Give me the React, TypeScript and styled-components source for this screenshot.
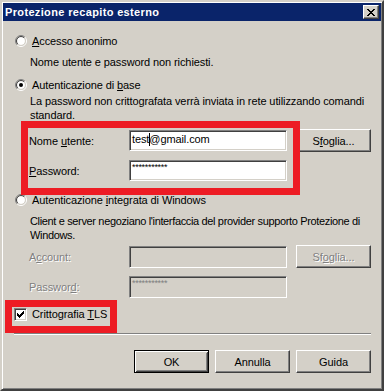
import React from "react";
import styled, { createGlobalStyle, css } from "styled-components";

const GlobalStyle = createGlobalStyle`
  html, body { margin: 0; padding: 0; background: #d4d0c8; }
  body { font-family: "Liberation Sans", Arial, sans-serif; font-size: 11px; color: #000; letter-spacing: -0.1px; }
  * { box-sizing: border-box; }
`;

const FACE = "#d4d0c8";
const SHADOW = "#808080";
const DARK = "#404040";

const Window = styled.div`
  position: relative;
  width: 384px;
  height: 391px;
  background: ${FACE};
  border-style: solid;
  border-width: 2px;
  border-color: ${FACE} ${DARK} ${DARK} ${FACE};
  box-shadow: inset 1px 1px #fff, inset -1px -1px ${SHADOW};
  display: flex;
  flex-direction: column;
`;

const TitleBar = styled.div`
  margin: 1px 1px 0 1px;
  height: 18px;
  background: #0a246a;
  display: flex;
  align-items: center;
  justify-content: space-between;
  padding: 0 2px 0 2px;
`;

const TitleText = styled.span`
  color: #fff;
  font-weight: bold;
  font-size: 11px;
  letter-spacing: 0.35px;
  line-height: 14px;
`;

const raised = css`
  border: 1px solid;
  border-color: #fff ${DARK} ${DARK} #fff;
  box-shadow: inset -1px -1px ${SHADOW}, inset 1px 1px ${FACE};
`;

const sunken = css`
  border: 1px solid;
  border-color: ${SHADOW} #fff #fff ${SHADOW};
  box-shadow: inset 1px 1px ${DARK}, inset -1px -1px ${FACE};
`;

const CloseButton = styled.div`
  ${raised};
  width: 16px;
  height: 14px;
  background: ${FACE};
  display: flex;
  align-items: center;
  justify-content: center;
`;

const Body = styled.div`
  flex: 1;
  display: flex;
  flex-direction: column;
  padding: 13px 11px 0 12px;
`;

const Row = styled.div<{ $mt?: number; $pl?: number }>`
  display: flex;
  align-items: center;
  height: 14px;
  margin-top: ${(p) => p.$mt ?? 0}px;
  padding-left: ${(p) => p.$pl ?? 0}px;
  gap: 5px;
  line-height: 14px;
  white-space: nowrap;
`;

const Desc = styled.div<{ $mt?: number; $ls?: number }>`
  margin-top: ${(p) => p.$mt ?? 0}px;
  padding-left: 16px;
  line-height: 14px;
  white-space: nowrap;
  ${(p) => p.$ls !== undefined && css`letter-spacing: ${p.$ls}px;`}
`;

const FieldRow = styled.div<{ $mt?: number }>`
  display: flex;
  align-items: center;
  height: 23px;
  margin-top: ${(p) => p.$mt ?? 0}px;
  padding-left: 15px;
`;

const FieldLabel = styled.span<{ $disabled?: boolean }>`
  width: 100px;
  line-height: 14px;
  white-space: nowrap;
  ${(p) =>
    p.$disabled &&
    css`
      color: ${SHADOW};
      text-shadow: 1px 1px #fff;
    `}
`;

const TextField = styled.div<{ $disabled?: boolean; $h?: number }>`
  ${sunken};
  width: 158px;
  height: ${(p) => p.$h ?? 21}px;
  background: ${(p) => (p.$disabled ? FACE : "#fff")};
  padding: 1px 2px;
  line-height: 15px;
  white-space: nowrap;
  overflow: hidden;
  display: flex;
  align-items: flex-start;
`;

const Stars = styled.span<{ $disabled?: boolean }>`
  font-size: 9px;
  line-height: 9px;
  letter-spacing: -0.3px;
  padding-top: 1px;
  color: ${(p) => (p.$disabled ? SHADOW : "#000")};
`;

const Caret = styled.span`
  display: inline-block;
  width: 1px;
  height: 13px;
  background: #000;
  margin-right: -1px;
  margin-top: 1px;
`;

const Button = styled.div<{ $default?: boolean; $disabled?: boolean; $ml?: number }>`
  width: 75px;
  height: 23px;
  margin-left: ${(p) => p.$ml ?? 0}px;
  background: ${FACE};
  display: flex;
  align-items: center;
  justify-content: center;
  line-height: 14px;
  ${(p) =>
    p.$default
      ? css`
          border: 1px solid #000;
          box-shadow: inset 1px 1px #fff, inset -1px -1px ${DARK},
            inset 2px 2px ${FACE}, inset -2px -2px ${SHADOW};
        `
      : raised};
  ${(p) =>
    p.$disabled &&
    css`
      color: ${SHADOW};
      text-shadow: 1px 1px #fff;
    `}
`;

const Separator = styled.div<{ $mt?: number }>`
  margin-top: ${(p) => p.$mt ?? 0}px;
  height: 2px;
  border-top: 1px solid ${SHADOW};
  border-bottom: 1px solid #fff;
`;

const ButtonBar = styled.div<{ $mt?: number }>`
  display: flex;
  justify-content: flex-end;
  gap: 6px;
  margin-top: ${(p) => p.$mt ?? 0}px;
`;

const Highlight = styled.div`
  position: absolute;
  border: 7px solid #ed1c24;
  pointer-events: none;
`;

const Mnemonic = styled.span`
  text-decoration: underline;
`;

const CloseGlyph = () => {
  const rows = ["11000011", "01100110", "00111100", "00011000", "00111100", "01100110", "11000011"];
  return (
    <svg width="8" height="7" viewBox="0 0 8 7" shapeRendering="crispEdges">
      {rows.map((r, y) =>
        r.split("").map((c, x) => (c === "1" ? <rect key={`${x}-${y}`} x={x} y={y} width="1" height="1" fill="#000" /> : null))
      )}
    </svg>
  );
};

const Radio: React.FC<{ checked?: boolean }> = ({ checked }) => {
  const arc = (r: number) => {
    const c = 6;
    const d = r * Math.SQRT1_2;
    return {
      tl: `M ${c - d} ${c + d} A ${r} ${r} 0 0 1 ${c + d} ${c - d}`,
      br: `M ${c + d} ${c - d} A ${r} ${r} 0 0 1 ${c - d} ${c + d}`,
    };
  };
  const o = arc(5.5);
  const i = arc(4.5);
  return (
    <svg width="12" height="12" viewBox="0 0 12 12" style={{ flex: "none" }}>
      <circle cx="6" cy="6" r="4" fill="#fff" />
      <path d={o.tl} stroke={SHADOW} fill="none" />
      <path d={o.br} stroke="#fff" fill="none" />
      <path d={i.tl} stroke={DARK} fill="none" />
      <path d={i.br} stroke={FACE} fill="none" />
      {checked && <circle cx="6" cy="6" r="2" fill="#000" />}
    </svg>
  );
};

const CheckBoxBox = styled.div`
  ${sunken};
  width: 13px;
  height: 13px;
  background: #fff;
  flex: none;
  display: flex;
  align-items: center;
  justify-content: center;
`;

const CheckGlyph = () => {
  const rows = ["0000001", "0000011", "1000111", "1101110", "1111100", "0111000", "0010000"];
  return (
    <svg width="7" height="7" viewBox="0 0 7 7" shapeRendering="crispEdges">
      {rows.map((r, y) =>
        r.split("").map((c, x) => (c === "1" ? <rect key={`${x}-${y}`} x={x} y={y} width="1" height="1" fill="#000" /> : null))
      )}
    </svg>
  );
};

export default function App() {
  return (
    <>
      <GlobalStyle />
      <Window>
        <TitleBar>
          <TitleText>Protezione recapito esterno</TitleText>
          <CloseButton>
            <CloseGlyph />
          </CloseButton>
        </TitleBar>
        <Body>
          <Row $pl={1}>
            <Radio />
            <span>
              <Mnemonic>A</Mnemonic>ccesso anonimo
            </span>
          </Row>
          <Desc $mt={7}>Nome utente e password non richiesti.</Desc>
          <Row $mt={9} $pl={1}>
            <Radio checked />
            <span>
              Autenticazione di <Mnemonic>b</Mnemonic>ase
            </span>
          </Row>
          <Desc $mt={2}>
            La password non crittografata verrà inviata in rete utilizzando comandi
            <br />
            standard.
          </Desc>
          <FieldRow $mt={7}>
            <FieldLabel>
              Nome <Mnemonic>u</Mnemonic>tente:
            </FieldLabel>
            <TextField>
              test
              <Caret />
              @gmail.com
            </TextField>
            <Button $ml={9}>
              <span>
                S<Mnemonic>f</Mnemonic>oglia...
              </span>
            </Button>
          </FieldRow>
          <FieldRow $mt={7}>
            <FieldLabel>
              <Mnemonic>P</Mnemonic>assword:
            </FieldLabel>
            <TextField>
              <Stars>***********</Stars>
            </TextField>
          </FieldRow>
          <Row $mt={11} $pl={1}>
            <Radio />
            <span>
              Autenticazione <Mnemonic>i</Mnemonic>ntegrata di Windows
            </span>
          </Row>
          <Desc $mt={7} $ls={-0.35}>
            Client e server negoziano l'interfaccia del provider supporto Protezione di
            <br />
            Windows.
          </Desc>
          <FieldRow $mt={3}>
            <FieldLabel $disabled>
              A<Mnemonic>c</Mnemonic>count:
            </FieldLabel>
            <TextField $disabled $h={22} />
            <Button $ml={9} $disabled>
              <span>
                Sf<Mnemonic>o</Mnemonic>glia...
              </span>
            </Button>
          </FieldRow>
          <FieldRow $mt={7}>
            <FieldLabel $disabled>
              Passwor<Mnemonic>d</Mnemonic>:
            </FieldLabel>
            <TextField $disabled $h={22}>
              <Stars $disabled>***********</Stars>
            </TextField>
          </FieldRow>
          <Row $mt={9}>
            <CheckBoxBox>
              <CheckGlyph />
            </CheckBoxBox>
            <span>
              Crittografia <Mnemonic>T</Mnemonic>LS
            </span>
          </Row>
          <Separator $mt={12} />
          <ButtonBar $mt={15}>
            <Button $default>OK</Button>
            <Button>Annulla</Button>
            <Button>Guida</Button>
          </ButtonBar>
        </Body>
        <Highlight style={{ left: 19, top: 119, width: 279, height: 74 }} />
        <Highlight style={{ left: 3, top: 298, width: 112, height: 33 }} />
      </Window>
    </>
  );
}
